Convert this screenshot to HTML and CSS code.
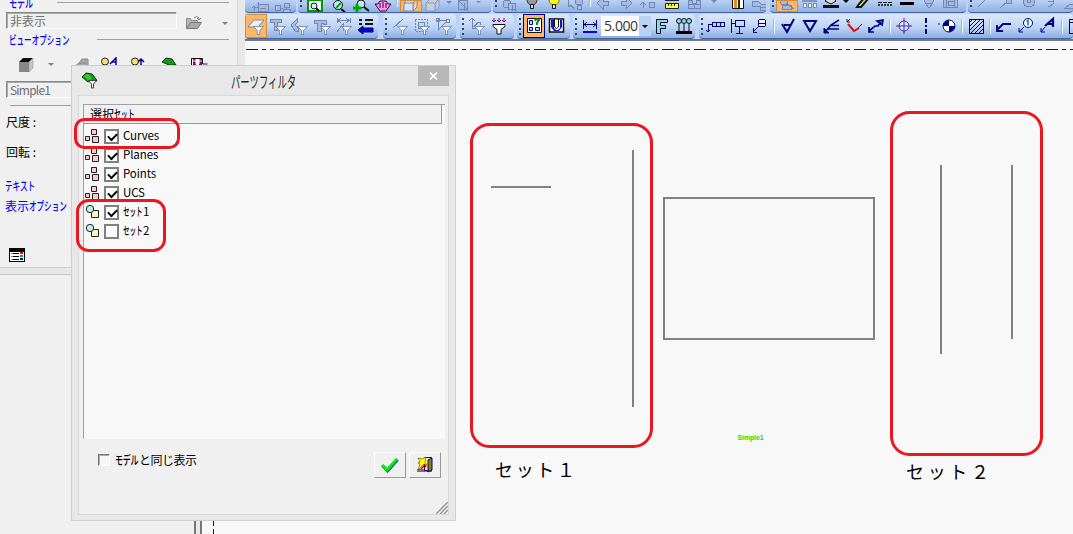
FILE: index.html
```html
<!DOCTYPE html>
<html lang="ja">
<head>
<meta charset="utf-8">
<title>パーツフィルタ</title>
<link rel="stylesheet" href="styles.css">
</head>
<body>
<svg width="0" height="0" class="defs">
  <defs>
    <symbol id="funnel" viewBox="0 0 12 10"><path d="M.5.5h11l-4 4.500v4.500h-3V5z" fill="#f4f8ff" stroke="#7187b4"/></symbol>
    <symbol id="sets" viewBox="0 0 16 16"><g fill="#ffc8c8" stroke="#222"><path d="M6.500 1.500h5v5h-5zM.5 8.500h4v4h-4zM7.500 8.500h6v6h-6z"/></g></symbol>
    <symbol id="group" viewBox="0 0 16 16"><path d="M6.500 6.500h7v7h-7z" fill="#fff6bd" stroke="#222"/><circle cx="5" cy="5" r="3.700" fill="#b8f0ef" stroke="#222"/></symbol>
    <symbol id="leaf" viewBox="0 0 18 18"><path d="M1 5l4-4 6 1 4 5 1 2H9l-2 1z" fill="#109818" stroke="#063d09"/><path d="M3 4l3-2 3 1 2 4-4 1z" fill="#35c53c"/></symbol>
  </defs>
</svg>
<div class="app">
  <aside class="panel">
    <div class="head h-model"><span class="kana k3">モデル</span><hr></div>
    <div class="model-row">
      <div class="field">非表示</div>
      <svg class="folder" width="18" height="15"><path d="M1.500 13.500v-10h4l1 2h6v2" fill="#b8b8b8" stroke="#888"/><path d="M1.500 13.500l4-6h11l-4 6z" fill="#aaa" stroke="#777"/><path d="M9 3q3-3 5 0v2M12 3l2 2 2-2" fill="none" stroke="#888"/></svg>
      <i class="caret"></i>
    </div>
    <div class="head h-view"><span class="kana k8">ビューオプション</span><hr></div>
    <div class="view-row">
      <svg width="16" height="16" class="cube"><path d="M1 5h10v10H1z" fill="#888"/><path d="M1 5l4-4h10l-4 4z" fill="#080808"/><path d="M11 5l4-4v10l-4 4z" fill="#c8c8c8" stroke="#888" stroke-width=".5"/></svg>
      <i class="caret"></i>
      <svg width="140" height="14" class="views"><path d="M1 9l4-3 3-4h6v12H1zM5 6h8" fill="#aaa" stroke="#888"/><g fill="#ffdc70" stroke="#222"><circle cx="31" cy="4.500" r="3.500"/><circle cx="61" cy="4.500" r="3.500"/></g><path d="M36 7l6-6v7M38 5h4M67 8V2m-3 3l3-3 3 3" stroke="#00009c" stroke-width="1.500" fill="none"/><path d="M88 5l4-4 6 1 4 6h-7z" fill="#159a1b" stroke="#063d09"/><path d="M117.500 10V1.500h11V7h5" fill="#fff" stroke="#111"/><path d="M119 2h3v6h-3zM125 2h3v6h-3z" fill="#8a0088"/><path d="M119 4h9M122 2v5M125 2v5" stroke="#fff"/></svg>
    </div>
    <div class="field simple">Simple1</div>
    <hr class="rule">
    <div class="label scale">尺度 :</div>
    <div class="label rotate">回転 :</div>
    <div class="link text"><span class="kana k4">テキスト</span></div>
    <div class="link disp">表示<span class="kana k6">オプション</span></div>
    <svg class="list-icon" width="17" height="15" shape-rendering="crispEdges"><path d="M.5.5h15v13H.5z" fill="#fff" stroke="#000"/><path d="M1 1h15v3H1zM4 5h6v1H4zM4 8h6v1H4zM4 11h6v1H4z"/><path d="M2 5h2v1H2zM2 8h2v1H2zM2 11h2v1H2z" fill="#888"/><path d="M11 4h3v2h-3z" fill="#f00"/><path d="M11 7h3v2h-3z" fill="#0b0"/><path d="M11 10h3v2h-3z" fill="#00f"/></svg>
    <div class="panel-end"></div>
  </aside>

  <main class="work">
    <div class="bars">
      <div class="row row1">
        <div class="seg w1a">
          <svg class="b dim"><path d="M4 7h4V2M8 4h10v7H8zM10 8h6M4 6v5M2 8l2-2 2 2"/></svg>
          <svg class="b dim"><path d="M3 5h5v5H3zM12 3h5v4h-5zM11 9h7v3h-7zM8 8h3M14 7v2"/></svg>
        </div>
        <div class="seg w1b"><i class="grip"></i>
          <svg class="b"><path d="M4 0h14v11H4z" fill="#fff" stroke="#090" stroke-width="2"/><circle cx="10" cy="6" r="3" fill="#cef" stroke="#111"/><path d="M12 8l3 3" stroke="#111" stroke-width="2"/></svg>
          <svg class="b ml"><circle cx="10" cy="5" r="4.500" fill="#bfe6ff" stroke="#111"/><path d="M8 8l5-5" stroke="#0a0" stroke-width="2"/><path d="M13 9l4 3" stroke="#111" stroke-width="2"/></svg>
          <svg class="b"><circle cx="11" cy="4" r="4" fill="#bfe6ff" stroke="#111"/><path d="M14 7l5 4" stroke="#111" stroke-width="2"/><path d="M3 8h8M7 4v8" stroke="#0a0" stroke-width="3"/></svg>
          <svg class="b"><path d="M3 4h3l2-3h6l2 3h3l-5 7H8z" fill="#ff9ae5" stroke="#400040"/><path d="M8 3v5M11 2v6M14 3v5" stroke="#400040"/></svg>
          <i class="sep"></i>
          <svg class="b on"><path d="M4 3h9v8H4zM4 3l4-4h9l-4 4M13 11l4-4V-1" fill="#dbe4f5" stroke="#7186b0"/></svg>
          <svg class="b"><path d="M4 3h9v8H4zM4 3l4-4h9l-4 4M13 11l4-4V-1" fill="#c5cede" stroke="#8798b6"/></svg>
          <svg class="b"><path d="M2 5h6L5 8z" fill="#7187b4" transform="translate(0 -4)"/></svg>
          <svg class="b dim wide-left"><path d="M4 0h9v9H4zM4 0l9 9M10 3v8l2-2 3 3"/></svg>
          <svg class="b"><path d="M0 3h5L2.500 5z" fill="#7187b4" transform="translate(0 -2)"/></svg>
        </div>
        <div class="seg w1c"><i class="grip"></i>
          <svg class="b dim"><circle cx="8" cy="4" r="4"/><path d="M9 3h7v6H9zM13 5v6l2-2 3 2"/></svg>
          <svg class="b"><circle cx="11" cy="0" r="5" fill="#999" stroke="#333"/><path d="M9.500 4.500h3v4h-3z" fill="#ddd" stroke="#111"/></svg>
          <svg class="b"><circle cx="11" cy="0" r="5" fill="#ffff18" stroke="#770"/><path d="M9.500 4.500h3v4h-3z" fill="#ff0" stroke="#111"/></svg>
          <svg class="b dim"><path d="M3 0v7l3-2 3 4"/><circle cx="14" cy="1" r="4"/><path d="M12 5h4v4h-4z"/></svg>
          <i class="sep"></i>
          <svg class="b dim"><path d="M4 3l6-6v4h5v4h-5v4z"/></svg>
          <svg class="b dim"><path d="M17 3l-6-6v4H6v4h5v4z"/></svg>
          <svg class="b dim ml"><path d="M4 8V3M1 5l3-3 3 3"/><circle cx="13" cy="5" r="3"/></svg>
          <svg class="b"><path d="M4.500 3.500h13v5h-13z" fill="#ff3" stroke="#222"/><path d="M4 .5h14M7.500 4v2M10.500 4v2M13.500 4v2" stroke="#222"/></svg>
          <svg class="b dim"><path d="M5 0h4v3h4V0h4v8H5zM5 4h12M11 4v4"/></svg>
          <svg class="b"><path d="M6 0h6L9 3z" fill="#7187b4"/></svg>
          <svg class="b"><path d="M5.500-1.500h11v10h-11z" fill="#fff" stroke="#111"/><path d="M7 0h3v8H7z" fill="#e58b1f"/><path d="M11 0h2v8h-2z" fill="#321"/></svg>
          <svg class="b dim"><path d="M3 1h6l3 3h6v6h-7V6H3zM12 7h5"/></svg>
        </div>
        <div class="seg w1d"><i class="grip"></i>
          <svg class="b on dim"><circle cx="8" cy="1" r="4"/><path d="M6 5h9v4H6zM10 3l8 6"/></svg>
          <svg class="b"><path d="M4-2h15v4H4z" fill="#8195bf"/><path d="M5.500 3.500h3v4h-3zM10.500 3.500h3v4h-3zM15.500 3.500h3v4h-3z" fill="#f3f7ff" stroke="#7187b4"/></svg>
          <svg class="b"><path d="M5 1l6-5 5 5-5 3z" fill="#ddd" stroke="#111"/><path d="M3 5h16v3H3z" fill="#111"/></svg>
          <svg class="b c10"><path d="M1 0h6L4 3z"/></svg>
          <svg class="b"><path d="M5 7h4l7-8-2-3-7 8z" fill="#eee14a" stroke="#111" stroke-width="2"/></svg>
          <svg class="b"><path d="M4 2.500h14" stroke="#111" stroke-dasharray="4 1"/><path d="M4 5h14" stroke="#111" stroke-width="1.500" stroke-dasharray="2 1"/></svg>
          <svg class="b"><path d="M4 3.500h14" stroke="#000" stroke-width="3"/></svg>
          <svg class="b dim"><circle cx="11" cy="-1" r="5"/><path d="M7 3h8l-4 5z"/></svg>
          <svg class="b dim"><path d="M3-2h11v9H3zM6-1h11v8H6zM8 1h6v4H8z"/></svg>
        </div>
        <div class="seg w1e"><i class="grip"></i>
          <svg class="b dim"><path d="M4 7l8-8"/></svg>
          <svg class="b dim"><path d="M4 8l7-6"/><circle cx="13" cy="1" r="3"/></svg>
          <svg class="b dim"><circle cx="11" cy="1" r="6"/><circle cx="11" cy="1" r="2"/></svg>
          <svg class="b dim nofill"><path d="M8 7q8-3 5-8M8 1h5"/></svg>
          <svg class="b dim"><path d="M3 8h14V4H8z"/></svg>
        </div>
      </div>
      <div class="row row2">
        <div class="seg w2a">
          <svg class="b on"><path d="M3 13l6-7h10l-6 7z" fill="#eff3f8" stroke="#7187b4"/><use href="#funnel" x="8" y="12" width="11" height="9"/></svg>
          <svg class="b dim"><path d="M3 5h11v3h-4v8H7V8H3z"/><use href="#funnel" x="8" y="12" width="11" height="9"/></svg>
          <svg class="b dim"><path d="M2 11l6-6v4l-2 2 3 3v3H6z"/><use href="#funnel" x="8" y="12" width="11" height="9"/></svg>
          <svg class="b dim"><path d="M3 6h12v4h-3V9h-2v8H6V9H3z"/><use href="#funnel" x="9" y="12" width="11" height="9"/></svg>
          <svg class="b dim nofill"><path d="M4 4v5M17 4v5M5 6.500h11M8 4l-3 2.500L8 9M13 4l3 2.500L13 9M4 18l6-8v7"/><use href="#funnel" x="8" y="12" width="11" height="9"/></svg>
          <svg class="b"><path d="M4 6h3M10 6h8M4 10h3M10 10h8" stroke="#111" stroke-width="2"/><path d="M3 16l5-4v2h10v4H8v2z" fill="#0000d0" stroke="#000070"/></svg>
        </div>
        <div class="seg w2b"><i class="grip"></i>
          <svg class="b dim"><path d="M4 14L14 5"/><use href="#funnel" x="8" y="12" width="11" height="9"/></svg>
          <svg class="b dim nofill"><path d="M4 5h12v12H4z" stroke-dasharray="2 1"/><path d="M7 8h6v6H7z"/><use href="#funnel" x="8" y="12" width="11" height="9"/></svg>
          <svg class="b dim nofill"><path d="M4 6h10M5 5v12M5 16l8-8M3 4h3v3H3zM13 5h3v3h-3z"/><use href="#funnel" x="8" y="12" width="11" height="9"/></svg>
        </div>
        <div class="seg w2c"><i class="grip"></i>
          <svg class="b dim nofill"><path d="M3 7l3-3 3 3M6 4v10h8M6 14l7-6M11 8h3v3"/><use href="#funnel" x="8" y="12" width="11" height="9"/></svg>
          <svg class="b"><path d="M6 4v4M11 4v4M16 4v4M4 6l2 2 2-2M9 6l2 2 2-2M14 6l2 2 2-2" stroke="#8b0087" fill="none"/><path d="M5 10.500h12v2l-4 3v4.500H9v-4.500l-4-3z" fill="#fff" stroke="#111"/></svg>
        </div>
        <div class="seg w2d"><i class="grip"></i>
          <svg class="b on strong"><path d="M4.500 4.500h14v14h-14z" fill="#fff" stroke="#111"/><path d="M6.500 6.500h3v4h-3zM6.500 13.500h3v3h-3zM12.500 13.500h4v3h-4z" fill="#b8d8ff" stroke="#0000a0"/><path d="M12 7q1-3 4-1l-2 3v2" stroke="#098c10" stroke-width="2" fill="none"/></svg>
          <svg class="b"><path d="M4.500 5h14v13h-14z" fill="#fff" stroke="#111" stroke-width="1.500"/><path d="M6 6h3v8l2 2h2l2-2V6h2v7l-3 4H9l-3-4z" fill="#1515bd"/><path d="M9.500 5h4v8q-2 3-4 0z" fill="#fff" stroke="#111"/></svg>
        </div>
        <div class="seg w2e"><i class="grip"></i>
          <svg class="b"><path d="M4.500 6v9M17.500 6v9M5 10.500h12M8 8l-3 2.500L8 13M14 8l3 2.500-3 2.500" stroke="#000080" fill="none"/><path d="M4 17h14v2H4z" fill="#0000ff"/></svg>
          <div class="combo"><span>5.000</span><i class="drop"></i></div>
          <svg class="b"><path d="M5.500 5.500h11v3h-7v3h5v3h-5v5h-4z" fill="#8cd4ff" stroke="#111"/></svg>
          <svg class="b"><g fill="#8cd4ff" stroke="#111"><circle cx="6" cy="7" r="2.500"/><circle cx="11" cy="7" r="2.500"/><circle cx="16" cy="7" r="2.500"/></g><path d="M6 10v8M11 10v8M16 10v8" stroke="#111"/><path d="M3 17h16v3H3z"/></svg>
        </div>
        <div class="seg w2f"><i class="grip"></i>
          <svg class="b navy"><path d="M7 8h12v4H7zM7 10H3v8M1 16l2 2 2-2M11 8v4M15 8v4"/></svg>
          <svg class="b navy"><path d="M4 5v14M8 6h9v6H8zM12 12v7M9 19h7M4 9h4"/></svg>
          <svg class="b navy"><circle cx="13" cy="9" r="4" fill="#edf4ff"/><path d="M9 9h8M10 12l-6 6M4 14v4h4"/></svg>
          <i class="sep"></i>
          <svg class="b navy bold"><path d="M5 10l5 8 7-13M7 11h6"/></svg>
          <svg class="b navy bold"><path d="M5 7h12l-6 10z"/></svg>
          <svg class="b navy smooth"><path d="M4 18l6-7 8-5M9 11.500h9M7 15h11" stroke-width="1.500"/><path d="M3 14v5h5z" fill="#000080"/></svg>
          <svg class="b"><path d="M5 10l6 7 5-3" stroke="#e00b15" stroke-width="2" fill="none"/><path d="M4 8l3-3M4 5v3h3M15 14l4-4" stroke="#222" fill="none"/></svg>
          <svg class="b navy smooth"><path d="M4 17l6-5h3l3-5M4 13v5h5M12 7l6-1-1 5z" stroke-width="1.700"/></svg>
          <i class="sep"></i>
          <svg class="b"><circle cx="11" cy="12" r="5" fill="#dce9ff" stroke="#1a34d0"/><path d="M3 12h5M14 12h5M11 4v5M11 15v5" stroke="#a20078"/><path d="M8 12h6M11 9v6" stroke="#1a34d0"/></svg>
          <svg class="b navy"><path d="M11 4v16" stroke-width="2" stroke-dasharray="5 2 2 2"/></svg>
          <svg class="b"><path d="M2 9v2" stroke="#111"/><circle cx="12" cy="12" r="6" fill="#fff" stroke="#000080"/><path d="M12 6a6 6 0 010 0v6H6a6 6 0 016-6zM12 18v-6h6a6 6 0 01-6 6z" fill="#000080"/></svg>
          <i class="sep"></i>
          <svg class="b navy"><path d="M4 5h14v14H4z"/><path d="M4 9l4-4M4 13l8-8M4 17l12-12M6 19L18 7M10 19l8-8M14 19l4-4"/></svg>
          <i class="sep"></i>
          <svg class="b navy smooth"><path d="M4 16l6-6h8M4 11v6h6" stroke-width="1.800"/></svg>
          <svg class="b navy smooth"><circle cx="13" cy="9" r="4.500" fill="#f5ffff"/><path d="M9 13l-5 5M4 14v4h4"/><path d="M11.500 7.500l1.500-1v5" stroke="#079494" stroke-width="1.600"/></svg>
          <svg class="b navy smooth"><path d="M8 12l8-7v8M10.500 10H16" stroke-width="2.200"/><path d="M8 13l-4 5M4 14v4h4"/></svg>
          <i class="sep"></i>
          <svg class="b navy"><path d="M4 5h14v14H4zM4 8h14"/></svg>
        </div>
      </div>
    </div>
  </main>

  <svg class="drawing" width="1073" height="534">
    <path d="M246 49.500H1073" stroke="#0a0a9d" stroke-dasharray="12 4 4 4 4 4"/>
    <path d="M213.500 521v5M213.500 529v5" stroke="#0a0a9d"/>
    <path d="M491 187h60M633 150v257M941 165v189M1012 165v174M664 198h210v141H664z" fill="none" stroke="#808080" stroke-width="2"/>
    <rect x="471.500" y="124.500" width="180" height="322" rx="18" class="mark"/>
    <rect x="891.500" y="112.500" width="150" height="342" rx="18" class="mark"/>
    <text x="737.500" y="440" class="tiny" textLength="26" lengthAdjust="spacingAndGlyphs">Simple1</text>
    <text x="495" y="477" class="caption" textLength="80">セット１</text>
    <text x="906" y="479" class="caption" textLength="83">セット２</text>
  </svg>

  <section class="dialog">
    <header class="title">
      <svg width="18" height="18"><use href="#leaf" width="18" height="18"/><path d="M7.500 8.500h8l-3 3.500v4h-2v-4z" fill="#fff" stroke="#444"/></svg>
      <h1><span class="kana k7">パーツフィルタ</span></h1>
      <button class="close" aria-label="close"><svg width="9" height="8"><path d="M1 .5l7 7M8 .5l-7 7" stroke="#fff" stroke-width="1.700"/></svg></button>
    </header>
    <div class="body">
      <div class="list">
        <div class="list-head">選択<span class="kana k3s">セット</span></div>
        <div class="item"><svg width="16" height="16"><use href="#sets"/></svg><i class="check yes"></i><span>Curves</span></div>
        <div class="item"><svg width="16" height="16"><use href="#sets"/></svg><i class="check yes"></i><span>Planes</span></div>
        <div class="item"><svg width="16" height="16"><use href="#sets"/></svg><i class="check yes"></i><span>Points</span></div>
        <div class="item"><svg width="16" height="16"><use href="#sets"/></svg><i class="check yes"></i><span>UCS</span></div>
        <div class="item"><svg width="16" height="16"><use href="#group"/></svg><i class="check yes"></i><span><span class="kana k3s">セット</span>1</span></div>
        <div class="item"><svg width="16" height="16"><use href="#group"/></svg><i class="check"></i><span><span class="kana k3s">セット</span>2</span></div>
      </div>
      <div class="foot">
        <label class="same"><i class="box"></i><span><span class="kana k3">モデル</span>と同じ表示</span></label>
        <button class="act"><svg width="20" height="18"><path d="M2 9l5 5L17 3" fill="none" stroke="#0010c0" stroke-width="3" transform="translate(.5 .8)"/><path d="M2 9l5 5L17 3" fill="none" stroke="#00f000" stroke-width="3"/></svg></button>
        <button class="act"><svg width="18" height="18"><path d="M1 13h15v3H1z" fill="#777"/><path d="M8.500 1.500h7v13h-7z" fill="#fffbb0" stroke="#00007c"/><path d="M12 4l4-2v12l-4 2z" fill="#8b8010" stroke="#00007c"/><path d="M2 2l4 1 4-2-1 5 2 3h-4l-5 5 2-6-2-1 2-1z" fill="#ff0" stroke="#665b00" stroke-width=".7"/><path d="M5 13l4-4M8 8l2 3" stroke="#c00000" stroke-width="1.400"/></svg></button>
      </div>
      <svg class="resize" width="12" height="12"><path d="M0 12L12 0M4 12l8-8M8 12l4-4" stroke="#999" stroke-width="1.500"/></svg>
    </div>
  </section>
  <svg class="notes" width="1073" height="534">
    <rect x="75.500" y="119.500" width="103" height="28" rx="9" class="mark"/>
    <rect x="77.500" y="200.500" width="87" height="50" rx="11" class="mark"/>
  </svg>
</div>
</body>
</html>
```

FILE: styles.css
```css
* { box-sizing: border-box; }
body { margin: 0; overflow: hidden; background: #f8f8f8; font: 12px/14px "Noto Sans CJK JP", sans-serif; color: #000; }
.defs { position: absolute; }
.app { position: relative; display: flex; width: 1073px; height: 534px; overflow: hidden; }
.kana { display: inline-block; white-space: nowrap; transform: scaleX(.63); transform-origin: 0 50%; font-weight: 500; }
.k3 { width: 24px; transform: scaleX(.67); }
.k3s { width: 20px; transform: scaleX(.57); }
.k4 { width: 30px; }
.k6 { width: 38px; }
.k8 { width: 61px; }
.k7 { width: 65px; transform: scaleX(.585); font-weight: 400; }

/* side panel */
.panel { display: flex; flex-direction: column; align-items: flex-start; width: 245px; height: 534px; background: linear-gradient(90deg, #f0f0f0 237px, #d8d8d8 237px, #d8d8d8 238px, #e8e8e8 238px); background-size: 245px 267px; background-repeat: no-repeat; }
.head { display: flex; align-items: center; width: 229px; height: 14px; padding-left: 9px; color: #00f; }
.head hr { height: 1px; margin: 0; border: 0; background: #a0a0a0; }
.h-model { margin-top: -4px; margin-bottom: -1px; }
.h-model hr { width: 172px; margin-left: auto; margin-top: -2px; }
.h-view { margin-top: 3px; }
.h-view hr { width: 132px; margin-left: auto; margin-top: -2px; }
.model-row { display: flex; align-items: center; margin-top: 2px; }
.field { width: 171px; height: 17px; margin-left: 6px; padding-left: 3px; border: 1px solid; border-color: #888 #fff #fff #888; box-shadow: inset 1px 1px #aaa; color: #707070; line-height: 15px; }
.folder { margin: 4px 0 0 8px; }
.caret { border: 3px solid transparent; border-top-color: #808080; border-bottom: 0; }
.model-row .caret { margin: 6px 0 0 19px; }
.view-row { display: flex; width: 240px; height: 16px; margin-top: 10px; padding-left: 18px; }
.view-row .caret { margin: 6px 0 0 14px; height: 3px; }
.views { margin-left: 20px; }
.simple { margin-top: 8px; letter-spacing: -.8px; }
.rule { width: 70px; height: 1px; margin: 7px 0 0 10px; border: 0; background: #a0a0a0; }
.label, .link { padding-left: 6px; white-space: nowrap; }
.scale { margin-top: 9px; }
.rotate { margin-top: 16px; }
.link { color: #00f; padding-left: 5px; }
.link.text { margin-top: 20px; }
.link.disp { margin-top: 6px; }
.list-icon { margin: 35px 0 0 9px; }
.panel-end { width: 202px; height: 268px; margin-top: 4px; border-top: 1px solid #ccc; background: linear-gradient(#e8e8e8 6px, #c8c8c8 6px, #c8c8c8 7px, transparent 7px), linear-gradient(90deg, #f0f0f0 194px, #777 194px, #777 196px, #e8e8e8 196px, #e8e8e8 200px, #777 200px); }

/* toolbars */
.work { width: 828px; }
.bars { height: 41px; background: #bdd2f7; border-bottom: 2px solid #77777b; }
.row { display: flex; width: 828px; overflow: hidden; }
.row1 { height: 13px; }
.row2 { height: 26px; padding-top: 1px; }
.seg { display: flex; flex: none; overflow: hidden; border-bottom: 1px solid #3f65a5; border-radius: 0 0 4px 4px; }
.row1 .seg { height: 13px; background: linear-gradient(#bad1f4, #8fb0e2); }
.row2 .seg { height: 25px; border-radius: 4px; background: linear-gradient(#dce8fa, #bed4f4 55%, #8caee2); }
.w1a { width: 51px; padding-left: 5px; margin-right: 2px; }
.w1b { width: 193px; margin-right: 2px; }
.w1c { width: 273px; margin-right: 4px; }
.w1d { width: 196px; margin-right: 2px; }
.w1e { width: 105px; }
.w2a { width: 133px; margin-right: 5px; }
.w2b { width: 73px; margin-right: 4px; }
.w2c { width: 54px; margin-right: 3px; }
.w2d { width: 53px; margin-right: 3px; }
.w2e { width: 122px; margin-right: 4px; }
.w2f { width: 374px; }
.b { flex: none; width: 22px; height: 24px; fill: #000; }
.row1 .b { height: 12px; }
.dim { fill: #a8bbdd; stroke: #7187b4; shape-rendering: crispEdges; }
.nofill { fill: none; }
.on { background: #ffb765; outline: 1px solid #d58b3e; outline-offset: -1px; }
.strong { outline-color: #000080; }
.navy { fill: none; stroke: #000080; shape-rendering: crispEdges; }
.bold { stroke-width: 2; shape-rendering: auto; }
.smooth { shape-rendering: auto; }
.ml { margin-left: 2px; }
.c10 { width: 10px; }
.wide-left { margin-left: -12px; }
.grip { flex: none; width: 6px; padding-left: 2px; }
.grip::before { content: ""; display: block; width: 2px; height: 17px; margin-top: 4px; background: repeating-linear-gradient(#27467d 0 2px, transparent 2px 5px); }
.row1 .grip::before { height: 8px; margin-top: 0; }
.sep { flex: none; width: 6px; }
.sep::before { content: ""; display: block; width: 2px; height: 15px; margin: 5px 0 0 2px; background: linear-gradient(90deg, #9ab6e2 50%, #f5f9ff 50%); }
.row1 .sep::before { height: 7px; margin-top: 0; }
.combo { display: flex; width: 50px; height: 20px; margin-top: 2px; background: #fff; font: 14px/20px "Open Sans", sans-serif; color: #333; }
.combo span { width: 38px; padding-left: 3px; overflow: hidden; white-space: nowrap; letter-spacing: -.4px; }
.drop { width: 12px; background: #b9d1f5; }
.drop::before { content: ""; display: block; margin: 9px 0 0 3px; width: 0; border: 3px solid transparent; border-top-color: #000; border-bottom: 0; }

/* drawing canvas */
.drawing, .notes { position: absolute; left: 0; top: 0; pointer-events: none; }
.mark { fill: none; stroke: #e91720; stroke-width: 3; }
.tiny { font: bold 7px "Liberation Sans", sans-serif; fill: #00e800; }
.caption { font: 18px "Noto Sans CJK JP", sans-serif; fill: #000; }

/* filter window */
.dialog { position: absolute; left: 71px; top: 65px; width: 385px; height: 456px; padding: 0 6px; border: 1px solid #cecece; background: #e8e8e8; }
.title { display: flex; height: 29px; padding: 6px 0 0 3px; }
.title h1 { margin: 0 0 0 132px; font: 16px/18px "Noto Sans CJK JP", sans-serif; color: #222; }
.close { display: flex; align-items: center; justify-content: center; width: 31px; height: 20px; margin: -6px 0 0 auto; padding: 0; border: 0; background: #b8b8b8; }
.body { position: relative; width: 371px; height: 420px; padding: 8px 2px 0 4px; border: 1px solid #d8d8d8; background: #f0f0f0; }
.list { width: 362px; height: 335px; border-top: 1px solid #a0a0a0; border-left: 1px solid #a0a0a0; background: #f8f8f8; }
.list-head { width: 358px; height: 19px; margin-bottom: 2px; padding-left: 6px; background: #f0f0f0; border-right: 1px solid #999; border-bottom: 1px solid #999; line-height: 17px; }
.item { display: flex; height: 19px; padding-left: 1px; line-height: 18px; font-size: 11.5px; }
.item > svg { margin-top: 2px; }
.item > span { margin-left: 4px; white-space: nowrap; letter-spacing: -.1px; }
.check { position: relative; flex: none; width: 15px; height: 15px; margin: 3px 0 0 3px; border: 2px solid #808080; background: #fff; }
.yes::after { content: ""; position: absolute; left: 2px; top: 2px; width: 7px; height: 4px; border-left: 2px solid #000; border-bottom: 2px solid #000; transform: rotate(-45deg); }
.foot { display: flex; padding: 13px 2px 0 15px; }
.same { display: flex; width: 276px; line-height: 16px; }
.same > span { letter-spacing: -.5px; }
.box { width: 12px; height: 12px; margin: 2px 5px 0 0; border: 1px solid; border-color: #777 #fff #fff #777; box-shadow: inset 1px 1px #aaa; background: #f6f6f6; }
.act { display: flex; align-items: center; justify-content: center; width: 32px; height: 26px; margin-right: 3px; padding: 0; border: 1px solid; border-color: #fff #999 #999 #fff; background: #f0f0f0; }
.resize { position: absolute; right: 0; bottom: 0; }
```
